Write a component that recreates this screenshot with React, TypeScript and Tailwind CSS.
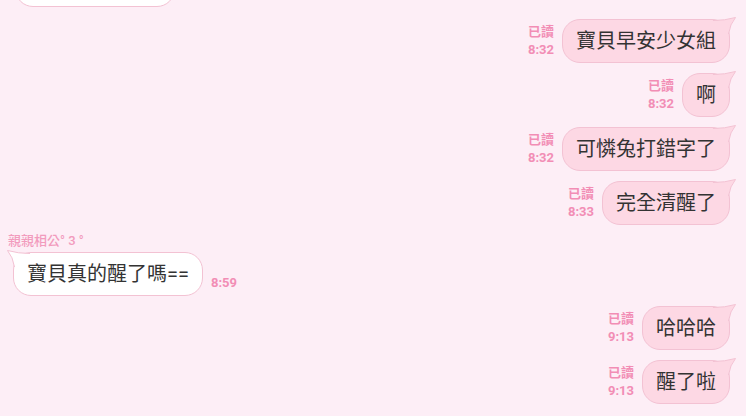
import React from 'react';

const cjk = { fontFamily: "Roboto, 'Noto Sans CJK TC', 'Noto Sans CJK SC', sans-serif" };

function Tail({ side, fill }: { side: 'left' | 'right'; fill: string }) {
  return (
    <svg
      width="24"
      height="20"
      viewBox="0 0 24 20"
      className={
        side === 'right'
          ? 'absolute top-[-3px] right-[-8px]'
          : 'absolute top-[-3px] left-[-8px] -scale-x-100'
      }
    >
      <path d="M0,3.5 Q12,3.5 22.5,0.5 Q17,7 15.5,17 L0,17 Z" fill={fill} />
      <path d="M0,3.5 Q12,3.5 22.5,0.5 Q17,7 15.5,17" fill="none" stroke="#f3c2d3" strokeWidth="1" />
    </svg>
  );
}

function Bubble({ text, side }: { text: string; side: 'left' | 'right' }) {
  const mine = side === 'right';
  return (
    <div
      style={cjk}
      className={`relative rounded-[18px] border border-[#f3c2d3] px-[13px] py-[8px] text-[20px] leading-[26px] text-[#333333] whitespace-nowrap ${
        mine ? 'bg-[#fdd8e4]' : 'bg-white'
      }`}
    >
      <Tail side={side} fill={mine ? '#fdd8e4' : '#ffffff'} />
      <span className="relative">{text}</span>
    </div>
  );
}

function Mine({ text, time }: { text: string; time: string }) {
  return (
    <div className="flex justify-end items-center gap-[8px] pr-[16px] mt-[10px]">
      <div style={cjk} className="flex flex-col items-end text-[13px] leading-[18px] font-bold text-[#f28db5]">
        <span>已讀</span>
        <span>{time}</span>
      </div>
      <Bubble text={text} side="right" />
    </div>
  );
}

export default function App() {
  return (
    <div className="w-full h-[416px] overflow-hidden bg-[#fdeef6] flex flex-col">
      {/* previous message, scrolled mostly out of view */}
      <div className="ml-[15px] -mt-[37px] w-[160px] h-[44px] rounded-[18px] border border-[#f3c2d3] bg-white shrink-0" />

      <div className="mt-[2px]" />
      <Mine text="寶貝早安少女組" time="8:32" />
      <Mine text="啊" time="8:32" />
      <Mine text="可憐兔打錯字了" time="8:32" />
      <Mine text="完全清醒了" time="8:33" />

      {/* incoming */}
      <div style={cjk} className="mt-[8px] pl-[8px] text-[13px] leading-[16px] font-medium text-[#f29bbd]">
        親親相公° 3 °
      </div>
      <div className="flex items-end gap-[8px] pl-[13px] mt-[3px]">
        <Bubble text="寶貝真的醒了嗎==" side="left" />
        <span style={cjk} className="mb-[5px] text-[13px] leading-[16px] font-bold text-[#f28db5]">
          8:59
        </span>
      </div>

      <Mine text="哈哈哈" time="9:13" />
      <Mine text="醒了啦" time="9:13" />
    </div>
  );
}
